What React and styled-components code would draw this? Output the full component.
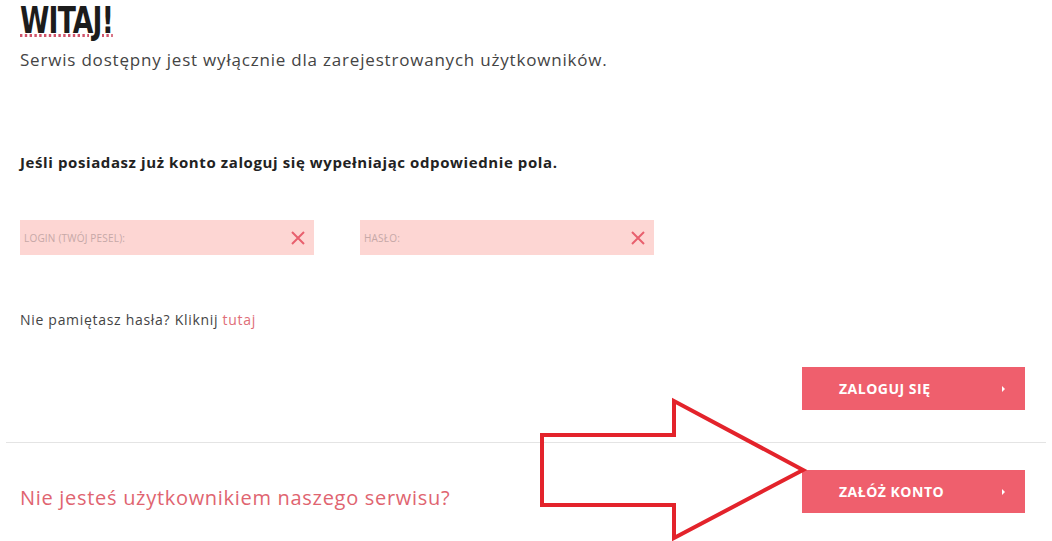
import React from "react";
import styled, { createGlobalStyle } from "styled-components";

const Global = createGlobalStyle`
  html, body { margin: 0; padding: 0; background: #fff; }
  body { font-family: "Open Sans", "Noto Sans", sans-serif; color: #444; }
  * { box-sizing: border-box; }
`;

const Page = styled.div`
  position: relative;
  width: 1052px;
  height: 541px;
  overflow: hidden;
  padding: 0 6px;
`;

const Inner = styled.div`
  padding: 0 21px 0 14px;
`;

const Heading = styled.h1`
  margin: 0;
  padding-top: 2px;
  font-family: "DejaVu Sans Condensed", "Liberation Sans Narrow", sans-serif;
  font-weight: 700;
  font-size: 37px;
  line-height: 37px;
  color: #1c1c1c;
  letter-spacing: -1px;
  display: inline-block;
  text-decoration: underline dotted #d0536a;
  text-decoration-thickness: 3px;
  text-underline-offset: 1px;
  transform: scaleX(0.8);
  transform-origin: left center;
`;

const Lead = styled.p`
  margin: 9px 0 0;
  font-size: 17px;
  line-height: 24px;
  color: #444;
  letter-spacing: 0.8px;
`;

const Instruction = styled.p`
  margin: 80px 0 0;
  font-size: 15px;
  line-height: 20px;
  font-weight: 700;
  color: #222;
  letter-spacing: 0.6px;
`;

const Fields = styled.div`
  display: flex;
  gap: 46px;
  margin-top: 48px;
`;

const Field = styled.div`
  width: 294px;
  height: 35px;
  background: #fdd6d3;
  display: flex;
  align-items: center;
  justify-content: space-between;
  padding: 0 8px 0 4px;
`;

const Placeholder = styled.span`
  font-size: 10px;
  color: #c6a8a7;
  letter-spacing: 0.2px;
`;

const Clear = styled.svg`
  width: 16px;
  height: 16px;
  margin-top: 1px;
`;

const Forgot = styled.p`
  margin: 55px 0 0;
  font-size: 14px;
  line-height: 20px;
  color: #444;
  letter-spacing: 0.7px;
`;

const Link = styled.a`
  color: #e06e78;
  text-decoration: none;
`;

const ButtonRow = styled.div`
  display: flex;
  justify-content: flex-end;
  margin-top: 37px;
`;

const Button = styled.button`
  width: 223px;
  height: 43px;
  border: 0;
  background: #ef5f6d;
  color: #fff;
  font-family: "Open Sans", sans-serif;
  font-weight: 700;
  font-size: 14px;
  letter-spacing: 0.5px;
  display: flex;
  align-items: center;
  justify-content: space-between;
  padding: 0 20px 0 37px;
  cursor: pointer;
`;

const Caret = styled.span`
  width: 0;
  height: 0;
  border-top: 3px solid transparent;
  border-bottom: 3px solid transparent;
  border-left: 3px solid #fff;
`;

const Divider = styled.hr`
  margin: 32px 0 0;
  border: 0;
  border-top: 1px solid #e4e4e4;
`;

const Bottom = styled.div`
  display: flex;
  justify-content: space-between;
  align-items: center;
  padding: 0 21px 0 14px;
  margin-top: 27px;
`;

const Question = styled.p`
  margin: 12px 0 0;
  font-size: 20px;
  color: #e06470;
  letter-spacing: 0.7px;
`;

const Arrow = styled.svg`
  position: absolute;
  left: 0;
  top: 0;
  width: 1052px;
  height: 541px;
  pointer-events: none;
`;

const X = () => (
  <Clear viewBox="0 0 16 16">
    <path d="M2 2 L14 14 M14 2 L2 14" stroke="#e8606e" strokeWidth="2" fill="none" />
  </Clear>
);

export default function App() {
  return (
    <>
      <Global />
      <Page>
        <Inner>
          <Heading>WITAJ!</Heading>
          <Lead>Serwis dostępny jest wyłącznie dla zarejestrowanych użytkowników.</Lead>
          <Instruction>Jeśli posiadasz już konto zaloguj się wypełniając odpowiednie pola.</Instruction>
          <Fields>
            <Field>
              <Placeholder>LOGIN (TWÓJ PESEL):</Placeholder>
              <X />
            </Field>
            <Field>
              <Placeholder>HASŁO:</Placeholder>
              <X />
            </Field>
          </Fields>
          <Forgot>
            Nie pamiętasz hasła? Kliknij <Link href="#">tutaj</Link>
          </Forgot>
          <ButtonRow>
            <Button>
              ZALOGUJ SIĘ
              <Caret />
            </Button>
          </ButtonRow>
        </Inner>
        <Divider />
        <Bottom>
          <Question>Nie jesteś użytkownikiem naszego serwisu?</Question>
          <Button>
            ZAŁÓŻ KONTO
            <Caret />
          </Button>
        </Bottom>
        <Arrow viewBox="0 0 1052 541">
          <polygon
            points="542,435 674,435 674,401 803,470 674,538 674,505 542,505"
            fill="none"
            stroke="#e3232b"
            strokeWidth="4"
            strokeLinejoin="miter"
          />
        </Arrow>
      </Page>
    </>
  );
}
